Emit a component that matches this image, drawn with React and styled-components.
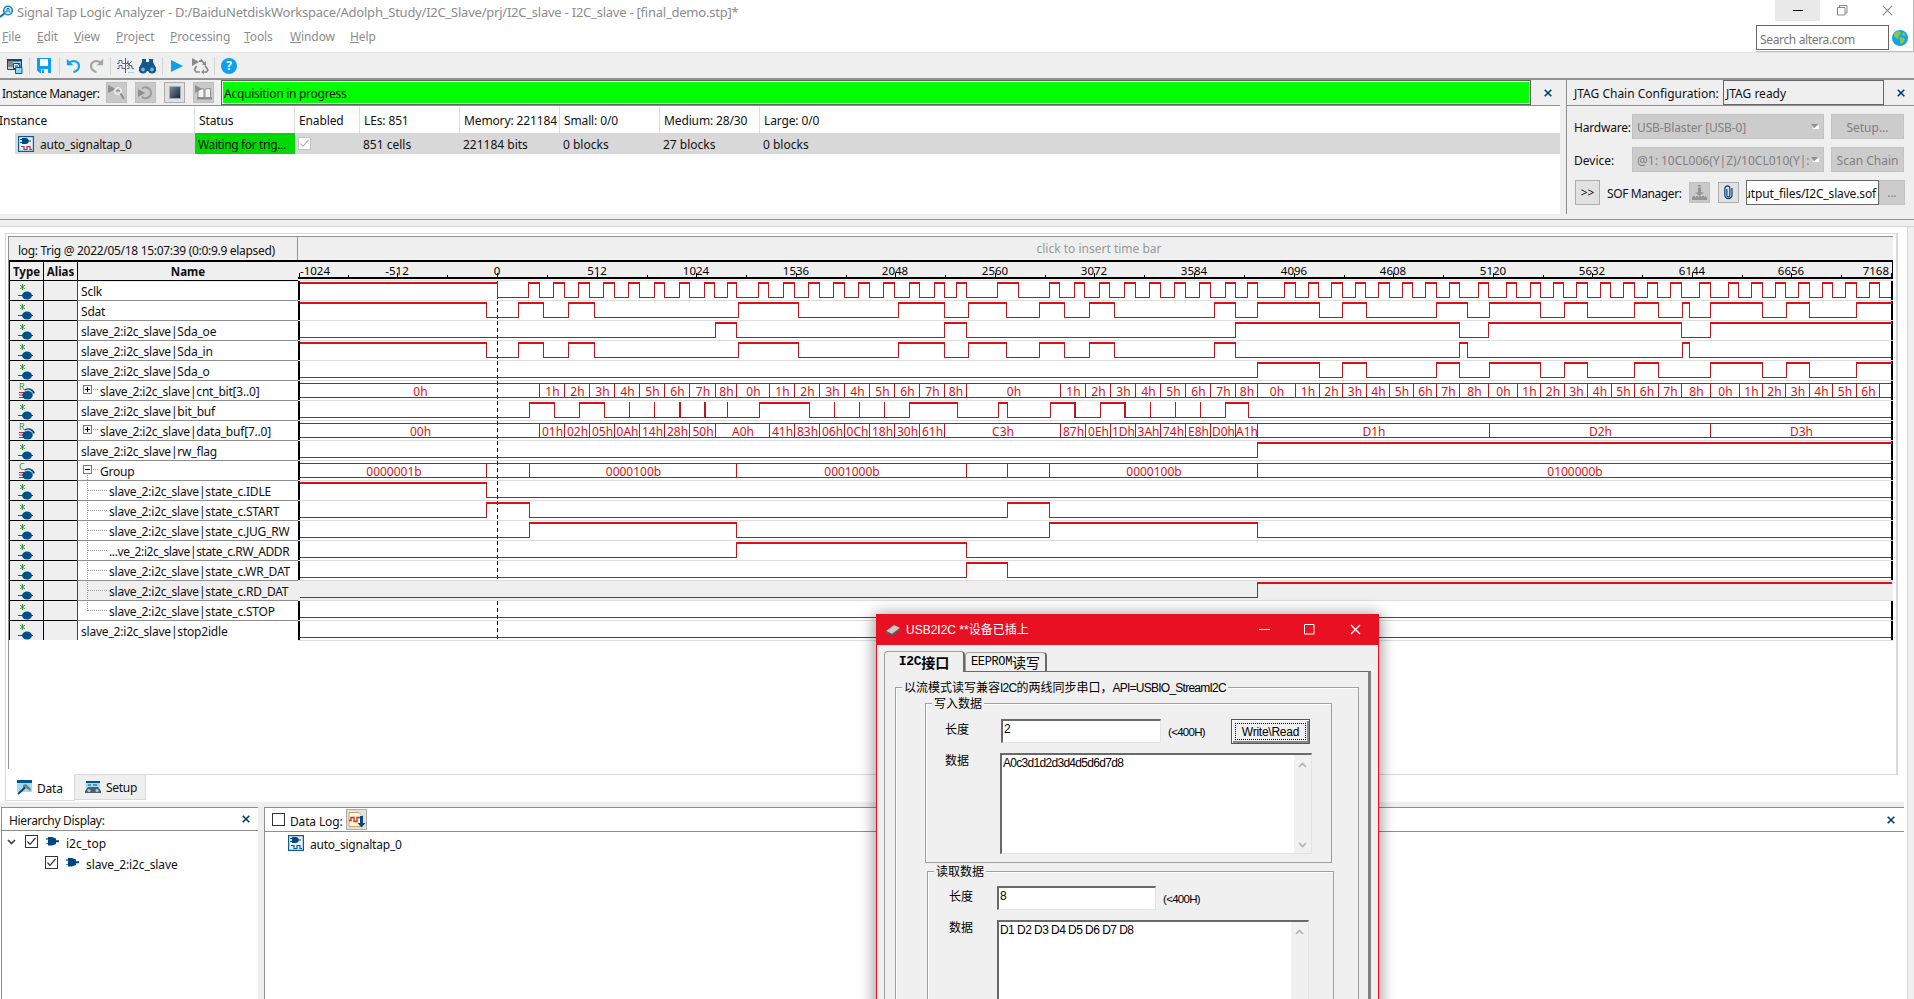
import React from "react";
import styled, { createGlobalStyle, css } from "styled-components";

const UI = `"Noto Sans", "Open Sans", "Noto Sans CJK SC", sans-serif`;
const DLG = `"Liberation Sans", "Noto Sans CJK SC", sans-serif`;

const GlobalStyle = createGlobalStyle`
  *, *::before, *::after { box-sizing: border-box; }
  html, body { margin: 0; padding: 0; overflow: hidden; background: #fff; }
  body { font: 12px/16px ${UI}; color: #111; }
  svg { display: block; flex: none; }
`;

const Text = styled.span`
  display: block;
  flex: none;
  white-space: pre;
  font-size: ${(p) => p.$size || 12}px;
  line-height: 16px;
  letter-spacing: ${(p) => p.$ls || 0}px;
  font-weight: ${(p) => (p.$bold ? 700 : 400)};
  color: ${(p) => p.$color || "inherit"};
  width: ${(p) => (p.$w ? p.$w + "px" : "auto")};
  margin-left: ${(p) => p.$ml || 0}px;
  margin-top: ${(p) => p.$mt || 0}px;
`;
const Spacer = styled.div`
  flex: ${(p) => (p.$w ? "none" : 1)};
  width: ${(p) => (p.$w ? p.$w + "px" : "auto")};
`;

/* ---------- window frame ---------- */
const Screen = styled.div`
  position: relative;
  width: 1914px;
  height: 999px;
  overflow: hidden;
  display: flex;
  flex-direction: column;
  background: #fff;
`;
const TopArea = styled.header`
  display: flex;
  height: 52px;
  border-right: 1px solid #bbb;
`;
const TitleAndMenu = styled.div`
  flex: 1;
`;
const TitleRow = styled.div`
  display: flex;
  align-items: center;
  height: 24px;
  color: #8c8c8c;
`;
const MenuRow = styled.nav`
  display: flex;
  height: 24px;
  align-items: center;
  color: #8c8c8c;
`;
const MenuItem = styled(Text)`
  &::first-letter {
    text-decoration: underline;
  }
`;
const WindowSide = styled.div`
  width: 157px;
  display: flex;
  flex-direction: column;
  border-bottom: 1px solid #bbb;
`;
const CaptionButtons = styled.div`
  display: flex;
  height: 25px;
  padding-left: 19px;
`;
const CaptionButton = styled.div`
  width: 45px;
  height: 21px;
  display: flex;
  align-items: center;
  justify-content: center;
  background: ${(p) => (p.$on ? "#e9e9e9" : "transparent")};
`;
const SearchRow = styled.div`
  display: flex;
  align-items: center;
`;
const SearchBox = styled.div`
  width: 133px;
  height: 25px;
  border: 1px solid #666;
  padding: 6px 0 0 3px;
  color: #777;
  margin-right: 3px;
`;
const ToolBar = styled.div`
  display: flex;
  align-items: center;
  height: 26px;
  background: #efefef;
  border-top: 1px solid #e4e4e4;
  padding-left: 7px;
`;
const ToolIcon = styled.div`
  width: ${(p) => p.$w || 16}px;
  margin-right: ${(p) => p.$mr || 0}px;
  flex: none;
`;
const Sep = styled.div`
  width: 1px;
  height: 18px;
  background: #cfd6da;
  margin-right: ${(p) => p.$mr}px;
`;

/* ---------- upper docks ---------- */
const UpperDocks = styled.section`
  display: flex;
  height: 136px;
  background: #efefef;
  border-top: 2px solid #929292;
`;
const InstancePanel = styled.div`
  width: 1560px;
  background: #fff;
`;
const PanelHead = styled.div`
  display: flex;
  align-items: center;
  height: ${(p) => p.$h || 26}px;
  background: ${(p) => p.$bg || "#efefef"};
  border-bottom: 1px solid #8e8e8e;
  padding-left: ${(p) => p.$pl || 0}px;
  padding-right: ${(p) => p.$pr || 0}px;
`;
const SmallButton = styled.div`
  width: 21px;
  height: 21px;
  display: flex;
  flex: none;
  align-items: center;
  justify-content: center;
  background: ${(p) => (p.$on ? "#e1e1e1" : "#c9c9c9")};
  border: 1px solid ${(p) => (p.$on ? "#adadad" : "#bfbfbf")};
  margin-right: ${(p) => (p.$mr === undefined ? 8 : p.$mr)}px;
`;
const ProgressBar = styled.div`
  width: 1310px;
  height: 25px;
  border: 1px solid #636363;
  padding: 1px;
  background: #e6f5e6;
`;
const ProgressFill = styled.div`
  height: 100%;
  padding: 4px 0 0 1px;
  background: #00ff00;
`;
const InstHead = styled.div`
  display: flex;
  height: 27px;
`;
const InstRow = styled.div`
  display: flex;
  height: 21px;
  margin-left: 15px;
  background: #d8d8d8;
`;
const Cell = styled.div`
  flex: none;
  display: flex;
  align-items: center;
  overflow: hidden;
  width: ${(p) => p.$w}px;
  padding-left: ${(p) => p.$pl || 0}px;
  border-right: ${(p) => (p.$line ? "1px solid #d9e2e2" : "none")};
  background: ${(p) => p.$bg || "transparent"};
`;
const CheckBox = styled.div`
  width: ${(p) => p.$s || 13}px;
  height: ${(p) => p.$s || 13}px;
  flex: none;
  border: 1px solid ${(p) => p.$c || "#333"};
  background: #fff;
  margin-left: ${(p) => p.$ml || 0}px;
`;
const JtagPanel = styled.div`
  width: 348px;
  margin-left: 6px;
  border-left: 1px solid #8e8e8e;
`;
const JtagBody = styled.div`
  display: grid;
  grid-template-rows: 25px 25px 25px;
  row-gap: 8px;
  padding: 8px 0 0 8px;
`;
const JtagRow = styled.div`
  display: flex;
  align-items: center;
`;
const Field = styled.div`
  width: ${(p) => p.$w}px;
  height: 25px;
  flex: none;
  display: flex;
  align-items: center;
  justify-content: ${(p) => (p.$end ? "flex-end" : "flex-start")};
  overflow: hidden;
  border: 1px solid #666;
  background: ${(p) => p.$bg || "#efefef"};
  padding: 0 2px;
`;
const Disabled = styled.div`
  width: ${(p) => p.$w}px;
  height: 25px;
  flex: none;
  display: flex;
  align-items: center;
  justify-content: ${(p) => (p.$combo ? "space-between" : "center")};
  padding: ${(p) => (p.$combo ? "0 4px 0 4px" : "0")};
  margin-right: ${(p) => p.$mr || 0}px;
  background: #cccccc;
  border: 1px solid #c2c2c2;
  color: #808080;
`;
const PushButton = styled.div`
  width: 25px;
  height: 25px;
  border: 1px solid #adadad;
  background: #e1e1e1;
  display: flex;
  align-items: center;
  justify-content: center;
  margin-right: 7px;
`;
const Splitter = styled.div`
  height: 13px;
  background: linear-gradient(#efefef 5px, #929292 5px, #929292 6px, #efefef 6px);
  border-bottom: 1px solid #d4d4d4;
`;

/* ---------- main pane ---------- */
const Lower = styled.main`
  flex: 1;
  background: #efefef;
`;
const LowerInner = styled.div`
  width: 1908px;
  height: 772px;
  background: #fff;
  border-right: 1px solid #d4d4d4;
`;
const TabFrame = styled.div`
  height: 542px;
  width: 1893px;
  margin-left: 5px;
  border: 1px solid #d9d9d9;
  border-right-width: 2px;
  padding: 2px 0 0 2px;
`;
const Spacing = styled.div`
  height: 6px;
`;
const WaveTable = styled.div`
  width: 1885px;
  height: 533px;
  border-left: 1px solid #929292;
  border-top: 1px solid #929292;
`;
const LogBar = styled.div`
  display: flex;
  height: 23px;
  background: #efefef;
`;
const LogCell = styled.div`
  width: 289px;
  padding: 6px 0 0 9px;
  border-right: 1px solid #929292;
`;
const InsertCell = styled.div`
  flex: 1;
  text-align: center;
  padding: 4px 0 0 7px;
  color: #989898;
`;
const Columns = styled.div`
  display: flex;
`;
const NameTable = styled.div`
  flex: none;
  width: 289px;
  border-top: 2px solid #000;
`;
const NameHead = styled.div`
  display: grid;
  grid-template-columns: 34px 34px 1fr;
  height: 18px;
`;
const HeadCell = styled.div`
  text-align: center;
  font-weight: 700;
  font-size: 11.5px;
  line-height: 20px;
  background: #efefef;
  border-left: 1px solid #000;
`;
const SignalRow = styled.div`
  display: grid;
  grid-template-columns: 34px 34px 1fr;
  height: 20px;
  background: ${(p) => (p.$on ? "#efefef" : "#fff")};
`;
const TypeCell = styled.div`
  background: #efefef;
  border-left: 1px solid #000;
  border-top: 1px solid #000;
`;
const NameCell = styled.div`
  display: flex;
  align-items: center;
  overflow: hidden;
  border-left: 1px solid #444;
  border-top: 1px solid ${(p) => (p.$first ? "#000" : "#8e8e8e")};
  padding: 3px 0 0 ${(p) => p.$pl}px;
`;
const Tabs = styled.div`
  display: flex;
  margin: -1px 0 0 5px;
  height: 28px;
`;
const Tab = styled.div`
  width: ${(p) => p.$w}px;
  height: ${(p) => (p.$on ? 27 : 26)}px;
  display: flex;
  align-items: center;
  gap: 5px;
  padding-left: ${(p) => (p.$on ? 11 : 10)}px;
  border: 1px solid #d9d9d9;
  ${(p) =>
    p.$on
      ? css`
          border-top-color: #fff;
          background: #fff;
        `
      : css`
          border-left: none;
          background: #efefef;
        `}
`;
const BottomDocks = styled.div`
  display: flex;
  width: 1904px;
  height: 198px;
  border-top: 5px solid #efefef;
`;
const Dock = styled.div`
  width: ${(p) => p.$w}px;
  margin-left: ${(p) => p.$ml || 0}px;
  border-left: 1px solid #8e8e8e;
  border-top: 1px solid #8e8e8e;
`;
const DockGap = styled.div`
  width: 6px;
  background: #efefef;
`;
const TreeRow = styled.div`
  display: flex;
  align-items: center;
  height: 21px;
  padding-left: ${(p) => p.$pl}px;
`;

/* ---------- dialog ---------- */
const Dialog = styled.div`
  position: absolute;
  left: 876px;
  top: 614px;
  width: 503px;
  height: 420px;
  background: #f0f0f0;
  border: 1px solid #e81123;
  border-top: none;
  box-shadow: 0 2px 14px 2px rgba(0, 0, 0, 0.4);
  font-family: ${DLG};
  color: #000;
`;
const DialogTitle = styled.div`
  height: 31px;
  display: flex;
  align-items: center;
  background: #e81123;
  color: #fff;
  padding-left: 8px;
`;
const DialogTabs = styled.div`
  display: flex;
  align-items: flex-end;
  height: 26px;
  padding: 6px 0 0 7px;
`;
const DialogTab = styled.div`
  width: ${(p) => p.$w}px;
  height: ${(p) => (p.$on ? 21 : 19)}px;
  display: flex;
  align-items: center;
  justify-content: center;
  border: 1px solid #a0a0a0;
  border-bottom: none;
  border-right: 2px solid #696969;
  border-radius: 4px 4px 0 0;
  font-weight: ${(p) => (p.$on ? 700 : 400)};
  margin-bottom: ${(p) => (p.$on ? -1 : 0)}px;
  background: #f0f0f0;
  z-index: ${(p) => (p.$on ? 1 : 0)};
`;
const Mono = styled.span`
  font: ${(p) => p.$size || 12}px/16px "Liberation Mono", monospace;
  font-weight: inherit;
  letter-spacing: ${(p) => p.$ls || 0}px;
`;
const Han = styled.span`
  font: 14px/16px "Noto Sans CJK SC", sans-serif;
  font-weight: inherit;
`;
const Tight = styled.span`
  letter-spacing: -0.75px;
`;
const Page = styled.div`
  width: 487px;
  height: 380px;
  margin-left: 7px;
  border-top: 1px solid #696969;
  border-left: 1px solid #a0a0a0;
  border-right: 3px solid #808080;
  padding: 15px 0 0 10px;
`;
const Group = styled.div`
  width: ${(p) => p.$w}px;
  height: ${(p) => p.$h}px;
  margin-left: ${(p) => p.$ml || 0}px;
  margin-top: ${(p) => p.$mt || 0}px;
  border: 1px solid #a0a0a0;
  box-shadow: inset 1px 1px 0 #fff;
`;
const Legend = styled.div`
  display: table;
  font-size: 12px;
  line-height: 16px;
  white-space: nowrap;
  background: #f0f0f0;
  padding: 0 2px;
  margin: ${(p) => p.$mt}px 0 ${(p) => p.$mb}px 6px;
`;
const FormRow = styled.div`
  display: flex;
  align-items: flex-start;
  padding-left: ${(p) => p.$pl}px;
  height: ${(p) => p.$h}px;
`;
const FormLabel = styled.div`
  width: ${(p) => p.$w}px;
  padding-top: ${(p) => p.$pt}px;
  font-size: 12px;
  line-height: 14px;
`;
const Sunken = styled.div`
  display: flex;
  justify-content: space-between;
  width: ${(p) => p.$w}px;
  height: ${(p) => p.$h}px;
  background: #fff;
  border-top: 2px solid #696969;
  border-left: 2px solid #696969;
  border-right: 1px solid #e3e3e3;
  border-bottom: 1px solid #e3e3e3;
  padding-left: 1px;
`;
const ScrollBar = styled.div`
  width: 17px;
  background: #f0f0f0;
  display: flex;
  flex-direction: column;
  justify-content: space-between;
  align-items: center;
  padding: 7px 0 5px;
`;
const WriteButton = styled.div`
  width: 79px;
  height: 25px;
  margin-left: 25px;
  border: 1px solid #555;
  box-shadow: inset 1px 1px 0 #fff, inset -2px -2px 0 #8a8a8a;
  padding: 3px;
`;
const FocusRect = styled.div`
  height: 100%;
  border: 1px dotted #000;
  display: flex;
  align-items: center;
  justify-content: center;
`;

/* ---------- icons ---------- */
const CloseX = ({ c = "#003c71", s = 8, w = 1.6 }) => (
  <svg width={s} height={s} viewBox="0 0 8 8">
    <path d="M.7.7 7.3 7.3M7.3.7.7 7.3" stroke={c} strokeWidth={w} fill="none" />
  </svg>
);
const AppIcon = () => (
  <svg width="13" height="14" viewBox="0 0 13 14">
    <path d="M0 12 5 8" stroke="#0071b5" strokeWidth="2" />
    <circle cx="8" cy="5.5" r="4.3" fill="#e8f6ff" stroke="#1584b8" strokeWidth="1.6" />
    <path d="M5 7h2V3.5h2V7h1.500" stroke="#0071b5" fill="none" />
  </svg>
);
const HierIcon = () => (
  <svg width="16" height="16" viewBox="0 0 16 16">
    <path d="M.5 1.500h14v10H.5z" fill="#a6dcf5" stroke="#17456b" />
    <path d="M0 1h15v2.500H0z" fill="#17456b" />
    <path d="M1 4h5v5H1z" fill="#8a8a8a" />
    <path d="M6.500 5.500H13v5H6.500z" fill="#d7f1ff" stroke="#17456b" />
    <path d="M8.500 9.500h6.500v6H8.500z" fill="#8ed6f8" stroke="#005a9c" />
    <path d="M8 8h3M11 6l2 2-2 2" stroke="#17456b" fill="none" />
  </svg>
);
const SaveIcon = () => (
  <svg width="15" height="15" viewBox="0 0 15 15">
    <path d="M0 0h14v15H3l-3-2.500z" fill="#0ca0f2" />
    <path d="M3 1h8v7H3z" fill="#fff" />
    <path d="M4 11h7v4H4z" fill="#fff" />
    <path d="M5 11.500h2V15H5z" fill="#0ca0f2" />
  </svg>
);
const UndoIcon = ({ flip, c }) => (
  <svg width="15" height="15" viewBox="0 0 15 15">
    <g transform={flip ? "matrix(-1 0 0 1 15 0)" : undefined}>
      <path d="M3 4.500C8 1.500 13 3.500 13 8c0 3-2 5-5.500 6.200" stroke={c} strokeWidth="2.200" fill="none" />
      <path d="M.8.8v6.500h6.500z" fill={c} />
    </g>
  </svg>
);
const WaveIcon = () => (
  <svg width="17" height="16" viewBox="0 0 17 16">
    <path d="M0 5.500h2v-3h3v3h3M9 5.500h2v-3M0 10.500h2v-3h3v3h3M10 10.500h2v-3h3v3h2" stroke="#5a6f86" fill="none" />
    <path d="M8.500 0v15" stroke="#a63a5a" />
    <path d="M10 8l5-5M10 4l5 5" stroke="#5a6f86" />
    <path d="M11 14.500h6" stroke="#9fd6f2" />
  </svg>
);
const BinoIcon = ({ w = 17 }) => (
  <svg width={w} height="16" viewBox="0 0 17 16">
    <path d="M3 1h4v3h3V1h4v3l3 6v3H0v-3l3-6z" fill="#16578c" />
    <circle cx="4" cy="11.500" r="4" fill="#16578c" />
    <circle cx="13" cy="11.500" r="4" fill="#16578c" />
    <circle cx="4" cy="11.500" r="1.900" fill="#6cb8df" />
    <circle cx="13" cy="11.500" r="1.900" fill="#6cb8df" />
  </svg>
);
const PlayIcon = () => (
  <svg width="12" height="12" viewBox="0 0 12 12">
    <path d="M0 0 12 6 0 12z" fill="#0ca0f2" />
  </svg>
);
const RecycleIcon = () => (
  <svg width="17" height="16" viewBox="0 0 17 16">
    <path d="M0 0 7 4 0 8z" fill="#8a8a8a" />
    <path d="M7 3.500 9.500 2l3 4M13 7.500l3 4.500-1.500 2H11M8 14H4l-1.500-2.500L4.500 8" stroke="#8a8a8a" strokeWidth="1.700" fill="none" />
    <path d="M12 11.500v5L9 14zM14 3v4.500l-4-1z" fill="#8a8a8a" />
  </svg>
);
const HelpIcon = () => (
  <svg width="16" height="16" viewBox="0 0 16 16">
    <circle cx="8" cy="8" r="8" fill="#0ca0f2" />
    <text x="8" y="12.300" textAnchor="middle" fontSize="12" fontWeight="700" fontFamily="Noto Sans, sans-serif" fill="#fff">?</text>
  </svg>
);
const RunOnceIcon = () => (
  <svg width="17" height="16" viewBox="0 0 17 16">
    <path d="M0 0 8 4 0 8z" fill="#8f8f8f" />
    <circle cx="10" cy="6" r="3.500" fill="#ddd" stroke="#f4f4f4" />
    <path d="M9 7V5h2v2" stroke="#777" fill="none" />
    <path d="M12.500 8.500 16 14" stroke="#8f8f8f" strokeWidth="2" />
  </svg>
);
const RepeatIcon = () => (
  <svg width="17" height="16" viewBox="0 0 17 16">
    <path d="M5 3.500A5.500 5.500 0 1 1 5 12" stroke="#9b9b9b" strokeWidth="2.200" fill="none" />
    <path d="M1 4 8 8 1 12z" fill="#8f8f8f" />
  </svg>
);
const StopIcon = () => (
  <svg width="12" height="13" viewBox="0 0 12 13">
    <defs>
      <linearGradient id="stopFill" x1="0" y1="0" x2="1" y2="1">
        <stop offset="0" stopColor="#7d8e9c" />
        <stop offset="1" stopColor="#17222c" />
      </linearGradient>
    </defs>
    <path d="M.5.5h11v12H.5z" fill="url(#stopFill)" stroke="#9fb0bd" />
  </svg>
);
const BookIcon = () => (
  <svg width="17" height="16" viewBox="0 0 17 16">
    <path d="M3 3.500 9 4v9.500l-6-1zM15.500 3.500 10 4v9.500l5.500-1z" fill="#f4f4f4" stroke="#8f8f8f" />
    <path d="M0 0 7 4 0 8zM2 12h15v2.500H2z" fill="#8f8f8f" />
  </svg>
);
const TapIcon = ({ wave = "#c1272d" }) => (
  <svg width="16" height="16" viewBox="0 0 16 16">
    <path d="M.6.6h14.800v14.800H.6z" fill="#e4f4fc" stroke="#0a5c96" strokeWidth="1.200" />
    <path d="M4 2h3.500a3.200 3 0 0 1 0 6H4zM2 3h2v1H2zM2 6h2v1H2zM10 4.500h3v1h-3z" fill="#00467f" />
    <path d="M3 10.500h3v3h3v-3h3v3h2" stroke={wave} fill="none" strokeWidth="1.200" />
  </svg>
);
const DownloadIcon = () => (
  <svg width="17" height="17" viewBox="0 0 17 17">
    <path d="M7 1h3v1.500H7zM7 3.500h3v5h3L8.500 12 4 8.500h3zM1 13h15v3H1z" fill="#949494" />
    <path d="M2 12.500h13" stroke="#949494" strokeDasharray="2 1" />
  </svg>
);
const ClipIcon = () => (
  <svg width="9" height="15" viewBox="0 0 9 15">
    <path d="M2.800 4v6.500a1.500 1.500 0 0 0 3 0V3.200a2 2 0 0 0-2-2.200C2 1 .8 2 .8 4v6a3.500 3.500 0 0 0 7.200 0V3" stroke="#0f4a86" strokeWidth="1.300" fill="none" />
  </svg>
);
const GlobeIcon = () => (
  <svg width="16" height="16" viewBox="0 0 16 16">
    <circle cx="8" cy="8" r="8" fill="#12a3ee" />
    <path d="M2 3 6 1l3 1-1 3-2 1 1 2-2 1-3-3zM8 7l4 1 1 2-3 4-2-1zM11 2l3 3-2 1-2-2z" fill="#8dc63f" />
  </svg>
);
const DataTabIcon = () => (
  <svg width="15" height="15" viewBox="0 0 15 15">
    <path d="M0 1h15v11H0z" fill="#9ddcf7" />
    <path d="M0 0h15v3H0z" fill="#00568f" />
    <path d="M6 5 9 4l5 5-1 2-4-3-3 0z" fill="#7b7b7b" />
    <path d="M1 14 8 7.500" stroke="#17456b" strokeWidth="2" />
  </svg>
);
const SetupTabIcon = () => (
  <svg width="16" height="13" viewBox="0 0 16 13">
    <path d="M1 1h14v10H1z" fill="#9ddcf7" />
    <path d="M1 0h14v2H1z" fill="#00568f" />
    <path d="M3 4h3M8 4h4" stroke="#17456b" />
    <path d="M3 6h10l3 4v2H0v-2z" fill="#4e5f6c" />
    <circle cx="4" cy="9.500" r="1.600" fill="#b5c7d2" />
    <circle cx="12" cy="9.500" r="1.600" fill="#b5c7d2" />
  </svg>
);
const PlugIcon = () => (
  <svg width="13" height="9" viewBox="0 0 13 9">
    <path d="M2 0h4l4 1.500v1.800h3v2h-3V7L6 8.500H2zM0 1.500h3v1H0zM0 6h3v1H0z" fill="#00467f" />
    <path d="M0 2h2M0 6.500h2" stroke="#4f8fc0" />
  </svg>
);
const LogIcon = () => (
  <svg width="18" height="16" viewBox="0 0 18 16">
    <path d="M1 .5h10l3 3v11H1z" fill="#fdf6d8" stroke="#bca96b" />
    <path d="M1 8.500h2v-3h3v4h3v-4h3" stroke="#d22" fill="none" strokeWidth="1.300" />
    <path d="M12 4h3v7h2.500L13.500 15.500 9.500 11H12z" fill="#00467f" />
  </svg>
);
const Tick = ({ c = "#333" }) => (
  <svg width="11" height="11" viewBox="0 0 11 11">
    <path d="M1.500 5.500 4 8.300 9.500 2" stroke={c} strokeWidth="1.200" fill="none" />
  </svg>
);
const SignalIcon = ({ kind }) => (
  <svg width="32" height="19" viewBox="0 0 32 19">
    {kind === "*" ? (
      <>
        <path d="M12.500 3v6M10 4l5 4M15 4l-5 4" stroke="#3d8f3d" fill="none" />
        <path d="M8 14.500h15" stroke="#8a2c5a" />
        <ellipse cx="17" cy="14.500" rx="5" ry="4" fill="#00508c" />
        <path d="M20 14.500h3" stroke="#00508c" />
      </>
    ) : (
      <>
        <text x="9" y="9" fontSize="9" fontFamily="Noto Sans, sans-serif" fill="#3d8f3d">{kind}</text>
        <path d="M9 11.500h5M9 14h5M9 16.500h5" stroke="#c1272d" />
        <path d="M14 9c3-3 9-2 11 3l-3 1z" fill="#17456b" />
        <path d="M15 9.500c3-2 6-1 8 2.500l-2 2z" fill="#a6dcf5" />
        <ellipse cx="17.500" cy="14.300" rx="5.200" ry="4.200" fill="#00508c" />
      </>
    )}
  </svg>
);
const ChipIcon = () => (
  <svg width="16" height="12" viewBox="0 0 16 12">
    <path d="M1 7 9 1l6 3-8 6z" fill="#c9c9c9" />
    <path d="M1 7l6 3v2L1 9zM7 10l8-6v2l-8 6z" fill="#5b5b5b" />
  </svg>
);
const Chevron = ({ up, c = "#b3b3b3" }) => (
  <svg width="9" height="6" viewBox="0 0 9 6">
    <path d={up ? "M1 5 4.500 1.500 8 5" : "M1 1 4.500 4.500 8 1"} stroke={c} strokeWidth="1.700" fill="none" />
  </svg>
);
const ComboArrow = () => (
  <svg width="8" height="5" viewBox="0 0 8 5">
    <path d="M1 5 8 5 8 1z" fill="#fff" />
    <path d="M0 0h7L3.500 4z" fill="#909090" />
  </svg>
);

/* ---------- signal data (page x of every transition) ---------- */
const X0 = 298;
const START = 300;
const END = 1891;
const sclk = [497,528,539,553,564,578,589,603,614,628,639,654,664,679,689,704,714,727,736,758,768,783,794,808,819,833,844,858,869,883,894,909,919,934,944,956,966,997,1018,1049,1059,1074,1084,1099,1109,1124,1135,1149,1160,1174,1185,1199,1210,1225,1235,1247,1257,1284,1295,1308,1318,1331,1342,1355,1365,1378,1389,1402,1412,1425,1436,1449,1459,1478,1488,1506,1516,1530,1540,1553,1563,1576,1587,1600,1610,1623,1634,1647,1657,1670,1681,1699,1710,1728,1738,1751,1762,1775,1785,1798,1809,1822,1832,1845,1856,1869,1879];
const early = [486,518,543,568,594,738,798,898,944,968,1006,1039,1064,1089,1114,1214,1235];
const sdaO = [1257,1319,1342,1366,1436,1459,1489,1540,1564,1587,1634,1658,1710,1762,1786,1809,1856];
const cnt = [539,564,589,614,639,664,689,715,736,769,794,819,844,869,894,919,944,966,1060,1085,1110,1135,1160,1185,1210,1235,1257,1295,1319,1342,1366,1389,1413,1436,1459,1488,1517,1540,1564,1587,1611,1634,1658,1681,1710,1739,1762,1785,1809,1832,1856,1879];
const P = "slave_2:i2c_slave|";

const signals = [
  { name: "Sclk", high: true, edges: sclk },
  { name: "Sdat", high: true, edges: [...early,1257,1319,1342,1366,1436,1467,1489,1540,1564,1587,1634,1658,1682,1689,1710,1762,1786,1809,1856] },
  { name: P + "Sda_oe", edges: [715,736,944,966,1235,1459,1488,1681,1710] },
  { name: P + "Sda_in", high: true, edges: [...early,1459,1467,1682,1689] },
  { name: P + "Sda_o", edges: sdaO },
  { name: P + "cnt_bit[3..0]", kind: "R", box: "+", bus: cnt, labels: cnt.map((_, i) => (i % 9) + "h").concat("") },
  { name: P + "bit_buf", edges: [529,554,579,604,759,809,909,957,998,1007,1050,1074,1100,1124,1225,1248], spikes: [[629,1],[654,1],[679,2],[704,2],[727,1],[834,1],[859,1],[884,1],[1075,1],[1125,1],[1150,1],[1175,1],[1200,1]] },
  { name: P + "data_buf[7..0]", kind: "R", box: "+", bus: [539,564,589,614,639,664,689,715,769,794,819,844,869,894,919,944,1060,1085,1110,1135,1160,1185,1210,1235,1257,1489,1710], labels: ["00h","01h","02h","05h","0Ah","14h","28h","50h","A0h","41h","83h","06h","0Ch","18h","30h","61h","C3h","87h","0Eh","1Dh","3Ah","74h","E8h","D0h","A1h","D1h","D2h","D3h"] },
  { name: P + "rw_flag", edges: [1257] },
  { name: "Group", kind: "C", box: "-", bus: [486,529,736,966,1007,1049,1257], labels: ["0000001b","","0000100b","0001000b","","","0000100b","0100000b"] },
  { name: P + "state_c.IDLE", child: true, high: true, edges: [486] },
  { name: P + "state_c.START", child: true, edges: [486,529,1007,1049] },
  { name: P + "state_c.JUG_RW", child: true, edges: [529,736,1049,1257] },
  { name: "...ve_2:i2c_slave|state_c.RW_ADDR", child: true, edges: [736,966], ls: -0.38 },
  { name: P + "state_c.WR_DAT", child: true, edges: [966,1007] },
  { name: P + "state_c.RD_DAT", child: true, on: true, edges: [1257] },
  { name: P + "state_c.STOP", child: true, last: true, edges: [] },
  { name: P + "stop2idle", edges: [] },
];

const HI = "#dc0f14";
const LO = "#b9181f";

function Trace({ s, y }) {
  const parts = [];
  if (s.bus) {
    const b = [START, ...s.bus, END];
    parts.push(<rect key="t" x={START - X0} y={y + 3} width={END - START} height="1" fill={LO} />);
    parts.push(<rect key="b" x={START - X0} y={y + 17} width={END - START} height="1" fill={LO} />);
    s.bus.forEach((x) => parts.push(<rect key={x} x={x - X0} y={y + 3} width="1" height="15" fill={LO} />));
    s.labels.forEach((l, i) =>
      parts.push(
        <text key={"l" + i} x={(b[i] + b[i + 1]) / 2 - X0 + 1} y={y + 16} textAnchor="middle" fill={HI}>{l}</text>
      )
    );
    return <g>{parts}</g>;
  }
  let level = !!s.high;
  let from = START;
  [...s.edges, END].forEach((x, i) => {
    parts.push(
      <rect key={i} x={from - X0} y={level ? y + 2 : y + 17} width={x - from + (level ? 1 : 0)} height={level ? 2 : 1} fill={level ? HI : LO} />
    );
    if (x !== END) parts.push(<rect key={"e" + i} x={x - X0} y={y + 2} width="1" height="16" fill={LO} />);
    level = !level;
    from = x;
  });
  (s.spikes || []).forEach(([x, w]) => parts.push(<rect key={"s" + x} x={x - X0} y={y + 2} width={w} height="15" fill={LO} />));
  return <g>{parts}</g>;
}

function WaveChart() {
  const top = 20;
  const ticks = [];
  for (let i = 0; i <= 16; i++) {
    const t = -1024 + i * 512;
    const x = Math.round(497 + t * 0.19447) - X0;
    ticks.push(<rect key={i} x={Math.max(x, 1)} y={13} width="1" height="4" fill="#000" />);
    if (i < 16) ticks.push(<rect key={"m" + i} x={x + 50} y={15} width="1" height="2" fill="#000" />);
    const anchor = i === 0 ? "start" : i === 16 ? "end" : "middle";
    ticks.push(
      <text key={"t" + i} x={i === 0 ? 2 : i === 16 ? 1591 : x} y={15} textAnchor={anchor} fill="#000" fontSize="11.500">{t}</text>
    );
  }
  return (
    <svg width="1596" height="382" viewBox="0 0 1596 382" fontFamily='"Noto Sans", sans-serif' fontSize="12" shapeRendering="crispEdges">
      <rect x="0" y="0" width="1595" height="20" fill="#efefef" />
      <rect x="0" y="0" width="1595" height="2" fill="#000" />
      <rect x="1594" y="0" width="1" height="19" fill="#000" />
      <rect x="0" y="17" width="1595" height="2" fill="#000" />
      {ticks}
      {signals.map((s, i) => {
        const y = top + i * 20;
        return (
          <g key={i}>
            {s.on && <rect x="0" y={y} width="1595" height="20" fill="#efefef" />}
            <rect x="0" y={y} width="1595" height="1" fill="#dcdcdc" />
            {!s.on && <rect x="0" y={y + 1} width="2" height="19" fill="#000" />}
            {!s.on && <rect x="1593" y={y + 1} width="2" height="19" fill="#000" />}
            {!s.on && <path d={`M199.500 ${y + 1}v19`} stroke="#000" strokeDasharray="4 3" />}
            <Trace s={s} y={y} />
          </g>
        );
      })}
      <rect x="0" y="380" width="1595" height="1" fill="#dcdcdc" />
    </svg>
  );
}

const Branch = ({ s }) =>
  s.child ? (
    <svg width="22" height="20" viewBox="0 0 22 20" shapeRendering="crispEdges">
      <path d={`M1.500 0v${s.last ? 9 : 20}M1.500 8.500H22`} stroke="#999" strokeDasharray="1 1" fill="none" />
    </svg>
  ) : (
    <svg width="16" height="20" viewBox="0 0 16 20" shapeRendering="crispEdges">
      <path d="M.5 3.500h8v8h-8z" fill="#fff" stroke="#777" />
      <path d={s.box === "+" ? "M2 7.500h5M4.500 5v5" : "M2 7.500h5"} stroke="#000" />
      <path d="M10 7.500h6" stroke="#999" strokeDasharray="1 1" />
      {s.box === "-" && <path d="M4.500 13v7" stroke="#999" strokeDasharray="1 1" />}
    </svg>
  );

function Signals() {
  return (
    <NameTable>
      <NameHead>
        <HeadCell>Type</HeadCell>
        <HeadCell>Alias</HeadCell>
        <HeadCell>Name</HeadCell>
      </NameHead>
      {signals.map((s, i) => (
        <SignalRow key={i} $on={s.on}>
          <TypeCell><SignalIcon kind={s.kind || "*"} /></TypeCell>
          <TypeCell />
          <NameCell $first={i === 0} $pl={s.child ? 8 : s.box ? 5 : 3}>
            {(s.child || s.box) && <Branch s={s} />}
            <Text $ls={s.ls || -0.2} $ml={s.child ? 1 : s.box ? 1 : 0}>{s.name}</Text>
          </NameCell>
        </SignalRow>
      ))}
    </NameTable>
  );
}

function FormBlock({ first, value, data }) {
  return (
    <>
      <FormRow $pl={first ? 19 : 21} $h={34}>
        <FormLabel $pt={4} $w={first ? 56 : 48}>长度</FormLabel>
        <Sunken $w={first ? 160 : 159} $h={24}><Text>{value}</Text></Sunken>
        <Text $ml={7} $mt={5} $w={38} $size={11.5} $ls={-0.7}>{"(<400H)"}</Text>
        {first && (
          <WriteButton><FocusRect><Text $ls={-0.25}>Write\Read</Text></FocusRect></WriteButton>
        )}
      </FormRow>
      <FormRow $pl={first ? 19 : 21} $h={102}>
        <FormLabel $pt={1} $w={first ? 55 : 48}>数据</FormLabel>
        <Sunken $w={312} $h={101}>
          <Text $ls={first ? -0.7 : -0.55}>{data}</Text>
          <ScrollBar><Chevron up /><Chevron /></ScrollBar>
        </Sunken>
      </FormRow>
    </>
  );
}

const menus = [["File", 2, 35], ["Edit", 0, 37], ["View", 0, 42], ["Project", 0, 54], ["Processing", 0, 74], ["Tools", 0, 46], ["Window", 0, 60], ["Help", 0, 40]];
const heads = [["Status", 100], ["Enabled", 65], ["LEs: 851", 100], ["Memory: 221184", 100], ["Small: 0/0", 100], ["Medium: 28/30", 100], ["Large: 0/0", 100]];

export default function App() {
  return (
    <Screen>
      <GlobalStyle />
      <TopArea>
        <TitleAndMenu>
          <TitleRow>
            <AppIcon />
            <Text $size={13} $ml={4} $ls={-0.23}>Signal Tap Logic Analyzer - D:/BaiduNetdiskWorkspace/Adolph_Study/I2C_Slave/prj/I2C_slave - I2C_slave - [final_demo.stp]*</Text>
          </TitleRow>
          <MenuRow>
            {menus.map(([m, ml, w]) => (
              <MenuItem key={m} $ml={ml} $w={w} $mt={1} $ls={-0.1}>{m}</MenuItem>
            ))}
          </MenuRow>
        </TitleAndMenu>
        <WindowSide>
          <CaptionButtons>
            <CaptionButton $on>
              <svg width="10" height="2"><path d="M0 .5h10" stroke="#000" /></svg>
            </CaptionButton>
            <CaptionButton>
              <svg width="11" height="11" viewBox="0 0 11 11"><path d="M.5 2.500h7.500v7.500H.5zM2.500 2.500v-2h7.500v7.500h-2" stroke="#888" fill="none" /></svg>
            </CaptionButton>
            <CaptionButton><CloseX c="#888" s={11} w={0.8} /></CaptionButton>
          </CaptionButtons>
          <SearchRow>
            <SearchBox><Text $ls={-0.35}>Search altera.com</Text></SearchBox>
            <GlobeIcon />
          </SearchRow>
        </WindowSide>
      </TopArea>
      <ToolBar>
        <ToolIcon $mr={6}><HierIcon /></ToolIcon>
        <Sep $mr={7} />
        <ToolIcon $w={15} $mr={7}><SaveIcon /></ToolIcon>
        <Sep $mr={6} />
        <ToolIcon $w={15} $mr={8}><UndoIcon c="#1aa1ee" /></ToolIcon>
        <ToolIcon $w={15} $mr={6}><UndoIcon flip c="#a5a5a5" /></ToolIcon>
        <Sep $mr={6} />
        <ToolIcon $w={17} $mr={5}><WaveIcon /></ToolIcon>
        <ToolIcon $w={17} $mr={6}><BinoIcon /></ToolIcon>
        <Sep $mr={8} />
        <ToolIcon $w={12} $mr={9}><PlayIcon /></ToolIcon>
        <ToolIcon $w={17} $mr={5}><RecycleIcon /></ToolIcon>
        <Sep $mr={6} />
        <ToolIcon><HelpIcon /></ToolIcon>
      </ToolBar>

      <UpperDocks>
        <InstancePanel>
          <PanelHead $pl={2}>
            <Text $w={104} $mt={2} $ls={-0.47}>Instance Manager:</Text>
            <SmallButton><RunOnceIcon /></SmallButton>
            <SmallButton><RepeatIcon /></SmallButton>
            <SmallButton $on><StopIcon /></SmallButton>
            <SmallButton $mr={7}><BookIcon /></SmallButton>
            <ProgressBar><ProgressFill><Text $ls={-0.27}>Acquisition in progress</Text></ProgressFill></ProgressBar>
            <Spacer $w={13} />
            <CloseX />
          </PanelHead>
          <InstHead>
            <Cell $w={195} $line><Text $ml={-1} $mt={3}>Instance</Text></Cell>
            {heads.map(([h, w]) => (
              <Cell key={h} $w={w} $pl={4} $line={h !== "Large: 0/0"}><Text $mt={3} $ls={-0.13}>{h}</Text></Cell>
            ))}
          </InstHead>
          <InstRow>
            <Cell $w={180} $pl={3}><TapIcon /><Text $ml={6} $mt={3} $ls={-0.22}>auto_signaltap_0</Text></Cell>
            <Cell $w={100} $pl={3} $bg="#00d900"><Text $mt={3} $ls={-0.38}>Waiting for trig...</Text></Cell>
            <Cell $w={65} $pl={3}><CheckBox $c="#c4c4c4"><Tick c="#b4b4b4" /></CheckBox></Cell>
            {["851 cells", "221184 bits", "0 blocks", "27 blocks", "0 blocks"].map((t, i) => (
              <Cell key={i} $w={100} $pl={3}><Text $mt={3}>{t}</Text></Cell>
            ))}
          </InstRow>
        </InstancePanel>
        <JtagPanel>
          <PanelHead $pl={7} $pr={9}>
            <Text $w={149} $mt={3}>JTAG Chain Configuration:</Text>
            <Field $w={161}><Text $mt={3}>JTAG ready</Text></Field>
            <Spacer />
            <CloseX />
          </PanelHead>
          <JtagBody>
            <JtagRow>
              <Text $w={58} $mt={3} $ml={-1} $ls={-0.2}>Hardware:</Text>
              <Disabled $combo $w={192} $mr={7}><Text $mt={3} $ls={-0.12}>USB-Blaster [USB-0]</Text><ComboArrow /></Disabled>
              <Disabled $w={73}><Text $mt={3}>Setup...</Text></Disabled>
            </JtagRow>
            <JtagRow>
              <Text $w={58} $mt={3} $ml={-1}>Device:</Text>
              <Disabled $combo $w={192} $mr={7}><Text $mt={3}>@1: 10CL006(Y|Z)/10CL010(Y|:</Text><ComboArrow /></Disabled>
              <Disabled $w={73}><Text $mt={3}>Scan Chain</Text></Disabled>
            </JtagRow>
            <JtagRow>
              <PushButton><Text $mt={1}>&gt;&gt;</Text></PushButton>
              <Text $w={82} $mt={3} $ls={-0.4}>SOF Manager:</Text>
              <SmallButton $mr={8}><DownloadIcon /></SmallButton>
              <SmallButton $on $mr={7}><ClipIcon /></SmallButton>
              <Field $w={133} $bg="#fff" $end><Text $mt={3} $ls={-0.15}>output_files/I2C_slave.sof</Text></Field>
              <Disabled $w={26}><Text>...</Text></Disabled>
            </JtagRow>
          </JtagBody>
        </JtagPanel>
      </UpperDocks>
      <Splitter />

      <Lower>
        <LowerInner>
          <Spacing />
          <TabFrame>
            <WaveTable>
              <LogBar>
                <LogCell><Text $ls={-0.3}>log: Trig @ 2022/05/18 15:07:39 (0:0:9.9 elapsed)</Text></LogCell>
                <InsertCell>click to insert time bar</InsertCell>
              </LogBar>
              <Columns>
                <Signals />
                <WaveChart />
              </Columns>
            </WaveTable>
          </TabFrame>
          <Tabs>
            <Tab $on $w={70}><DataTabIcon /><Text $mt={3} $ls={-0.2}>Data</Text></Tab>
            <Tab $w={71}><SetupTabIcon /><Text $mt={2} $ls={-0.3}>Setup</Text></Tab>
          </Tabs>
          <BottomDocks>
            <Dock $w={257} $ml={1}>
              <PanelHead $h={23} $bg="#fff" $pl={7} $pr={8}>
                <Text $mt={3} $ls={-0.33}>Hierarchy Display:</Text>
                <Spacer />
                <CloseX />
              </PanelHead>
              <TreeRow $pl={5}>
                <Chevron c="#444" />
                <CheckBox $ml={9}><Tick /></CheckBox>
                <Spacer $w={8} /><PlugIcon />
                <Text $ml={7} $mt={4}>i2c_top</Text>
              </TreeRow>
              <TreeRow $pl={43}>
                <CheckBox><Tick /></CheckBox>
                <Spacer $w={8} /><PlugIcon />
                <Text $ml={7} $mt={4} $ls={-0.1}>slave_2:i2c_slave</Text>
              </TreeRow>
            </Dock>
            <DockGap />
            <Dock $w={1640}>
              <PanelHead $h={24} $bg="#fff" $pl={7} $pr={9}>
                <CheckBox />
                <Text $ml={5} $w={56} $mt={4} $ls={-0.15}>Data Log:</Text>
                <SmallButton $on><LogIcon /></SmallButton>
                <Spacer />
                <CloseX />
              </PanelHead>
              <TreeRow $pl={23}>
                <TapIcon wave="#0a5c96" />
                <Text $ml={6} $mt={4} $ls={-0.22}>auto_signaltap_0</Text>
              </TreeRow>
            </Dock>
          </BottomDocks>
        </LowerInner>
      </Lower>

      <Dialog>
        <DialogTitle>
          <ChipIcon />
          <Text $ml={5} $mt={1}>USB2I2C **设备已插上</Text>
          <Spacer />
          <svg width="11" height="2"><path d="M0 .5h11" stroke="#fff" /></svg>
          <Spacer $w={34} />
          <svg width="11" height="11"><path d="M.5.5h9.500v9.500H.5z" stroke="#fff" fill="none" /></svg>
          <Spacer $w={35} />
          <CloseX c="#fff" s={11} w={0.9} />
          <Spacer $w={17} />
        </DialogTitle>
        <DialogTabs>
          <DialogTab $on $w={81}><Mono $size={13} $ls={-0.3}>I2C</Mono><Han>接口</Han></DialogTab>
          <DialogTab $w={82}><Mono $ls={-0.35}>EEPROM</Mono><Han>读写</Han></DialogTab>
        </DialogTabs>
        <Page>
          <Group $w={464} $h={400}>
            <Legend $mt={-8} $mb={-1}>以流模式读写兼容<Tight>I2C</Tight>的两线同步串口，<Tight>API=USBIO_StreamI2C</Tight></Legend>
            <Group $w={407} $h={160} $ml={29} $mt={8}>
              <Legend $mt={-8} $mb={7}>写入数据</Legend>
              <FormBlock first value="2" data="A0c3d1d2d3d4d5d6d7d8" />
            </Group>
            <Group $w={407} $h={180} $ml={31} $mt={8}>
              <Legend $mt={-8} $mb={6}>读取数据</Legend>
              <FormBlock value="8" data="D1 D2 D3 D4 D5 D6 D7 D8" />
            </Group>
          </Group>
        </Page>
      </Dialog>
    </Screen>
  );
}
